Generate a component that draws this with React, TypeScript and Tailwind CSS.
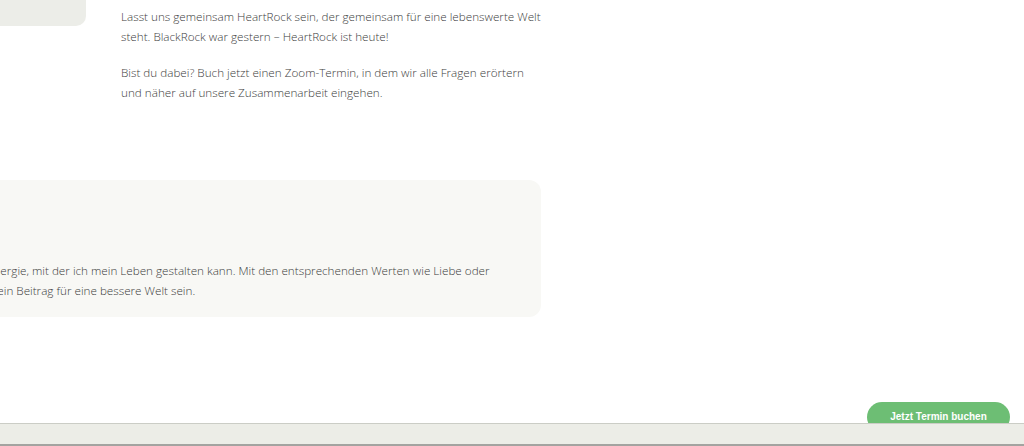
export default function App() {
  return (
    <div className="relative flex h-[446px] w-full flex-col overflow-hidden bg-white font-['Open_Sans',sans-serif] text-[11.7px] font-light leading-[20px] text-[#3c3c3c]">
      <main className="flex-1">
        <div className="flex gap-[35px]">
          <div className="h-[26px] w-[86px] shrink-0 rounded-br-[10px] bg-[#ecede8]" />
          <div className="w-[425px] pt-[6px]">
            <p>
              Lasst uns gemeinsam HeartRock sein, der gemeinsam für eine lebenswerte Welt steht. BlackRock war gestern – HeartRock ist heute!
            </p>
            <p className="mt-4">
              Bist du dabei? Buch jetzt einen Zoom-Termin, in dem wir alle Fragen erörtern und näher auf unsere Zusammenarbeit eingehen.
            </p>
          </div>
        </div>

        <div className="ml-[-60px] mt-[78px] h-[137px] w-[601px] rounded-[12px] bg-[#f8f8f5] pl-[47px] pt-[80px]">
          <p className="whitespace-nowrap">
            Energie, mit der ich mein Leben gestalten kann. Mit den entsprechenden Werten wie Liebe oder
            <br />
            mein Beitrag für eine bessere Welt sein.
          </p>
        </div>
      </main>

      <button
        type="button"
        className="absolute bottom-[14px] right-[14px] z-0 h-[30px] w-[143px] rounded-[15px] bg-[#6dbe74] font-['Liberation_Sans',Arial,sans-serif] text-[10px] font-bold text-white"
      >
        Jetzt Termin buchen
      </button>

      <footer className="relative z-10 h-[23px] border-t border-[#cbcdc6] bg-[#ecede7]">
        <div className="absolute inset-x-0 bottom-0 h-[2px] bg-[#a3a3a0]" />
      </footer>
    </div>
  );
}
